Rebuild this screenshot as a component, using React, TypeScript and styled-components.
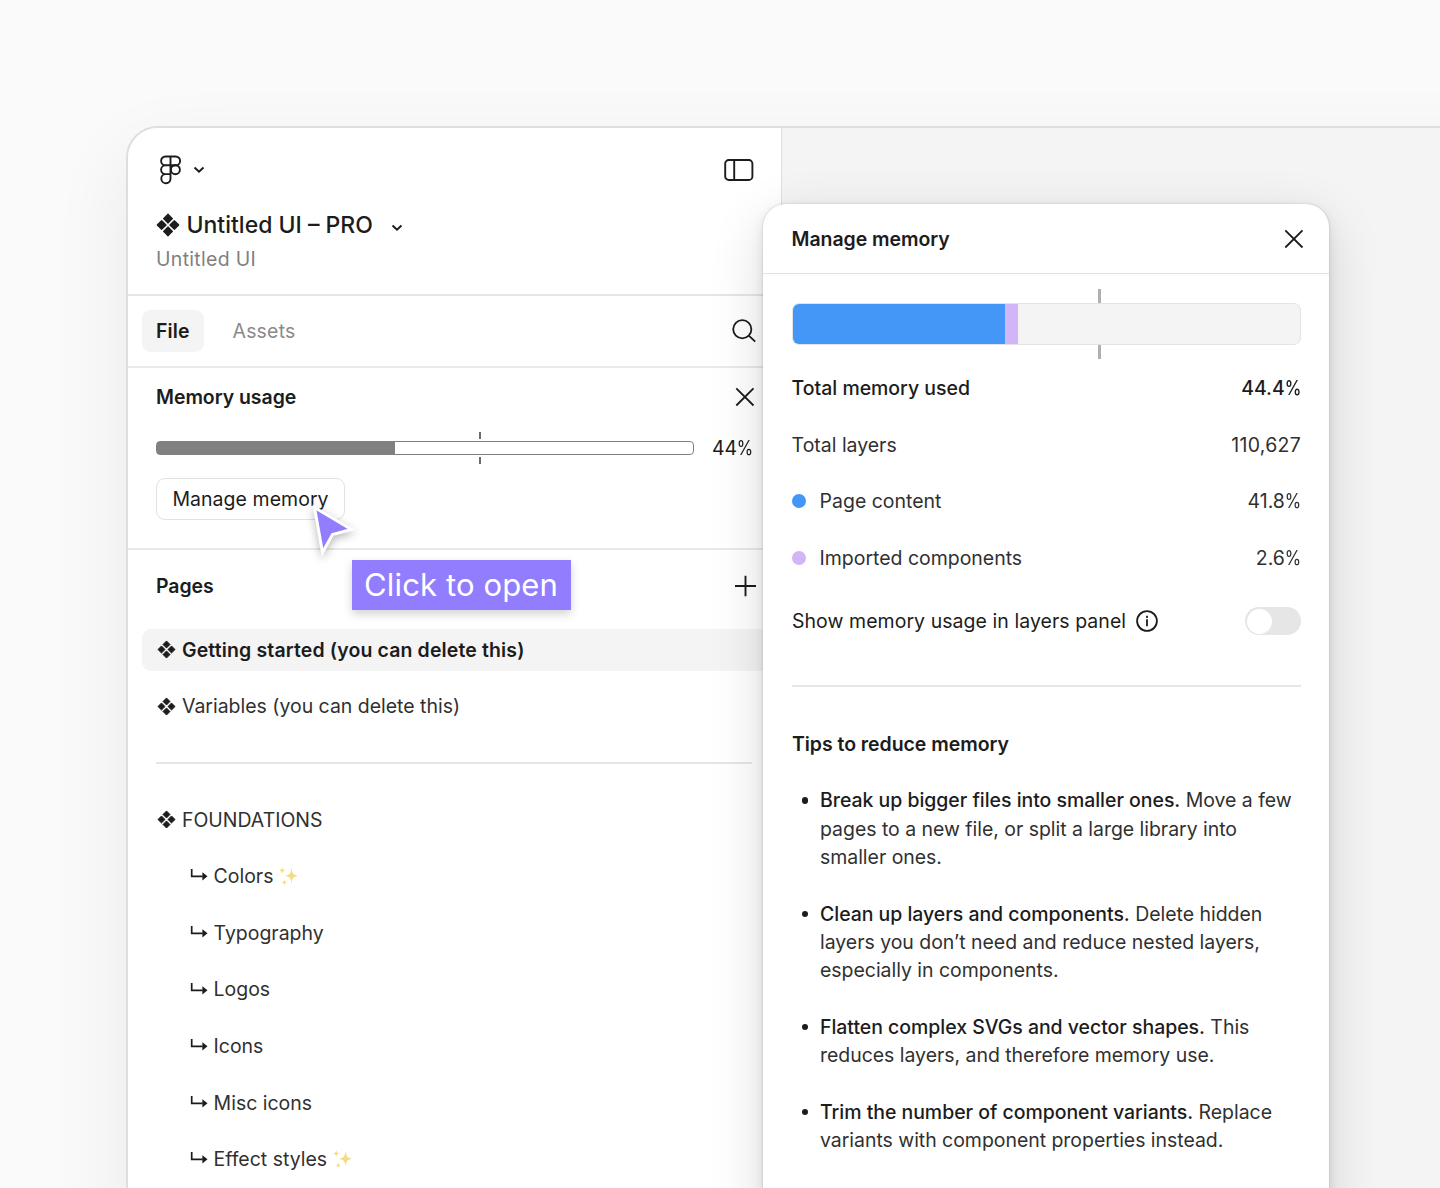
import React from "react";
import styled, { createGlobalStyle } from "styled-components";

const Global = createGlobalStyle`
  * { box-sizing: border-box; }
  body { margin: 0; background: #fafafa; }
  button { font: inherit; letter-spacing: inherit; color: inherit; background: none; border: 0; padding: 0; }
  svg { display: block; flex: none; }
`;

const Stage = styled.main`
  position: relative;
  height: 1188px;
  padding: 126px 0 0 126px;
  overflow: hidden;
  background: #fafafa;
  font-family: Inter, "Liberation Sans", sans-serif;
  font-size: 19.47px;
  line-height: 28.32px;
  letter-spacing: 0;
  color: #1c1c1c;
`;

const Window = styled.div`
  display: flex;
  width: 1500px;
  height: 1300px;
  border: 2px solid #dedede;
  border-radius: 32px;
  background: #f4f4f4;
  overflow: hidden;
  box-shadow: 0 28px 80px rgba(0, 0, 0, 0.07);
`;

const Sidebar = styled.aside`
  width: 654px;
  flex: none;
  background: #fff;
  border-right: 1px solid #dedede;
`;

const SidebarHeader = styled.header`
  height: 168px;
  padding: 27px 27px 0 28px;
  border-bottom: 2px solid #e6e6e6;
`;

const Bar = styled.div`
  display: flex;
  align-items: center;
  justify-content: space-between;
`;

const Cluster = styled.div<{ $gap: number; $indent?: number }>`
  display: flex;
  align-items: center;
  gap: ${(p) => p.$gap}px;
  padding-left: ${(p) => p.$indent ?? 0}px;
`;

const FileName = styled.h1`
  display: flex;
  align-items: center;
  margin: 23px 0 0;
  height: 34px;
  font-size: 23px;
  font-weight: 500;
  letter-spacing: 0;
  > svg:last-child { margin-top: 5px; }
`;

const FileTitle = styled.span`
  margin: 0 18px 0 6.5px;
`;

const Project = styled.div`
  margin-top: 3px;
  color: #808080;
  letter-spacing: 0.33px;
`;

const Tabs = styled.nav`
  display: flex;
  align-items: center;
  height: 72px;
  padding: 0 25px 0 14px;
  border-bottom: 2px solid #e9e9e9;
`;

const Tab = styled.button<{ $active?: boolean }>`
  height: 42px;
  padding: 0 14px;
  border-radius: 9px;
  background: ${(p) => (p.$active ? "#f4f4f4" : "transparent")};
  color: ${(p) => (p.$active ? "#1c1c1c" : "#8a8a8a")};
  font-weight: ${(p) => (p.$active ? 600 : 400)};
  letter-spacing: ${(p) => (p.$active ? 0.1 : 0.2)}px;
  margin-right: 15px;
`;

const SearchSlot = styled.span`
  margin-left: auto;
`;

const Memory = styled.section`
  height: 182px;
  padding: 15px 26px 0 28px;
  border-bottom: 2px solid #e9e9e9;
`;

const Heading = styled.h2`
  margin: 0;
  font-size: inherit;
  font-weight: 600;
  letter-spacing: -0.03px;
`;

const Meter = styled.div`
  display: flex;
  align-items: center;
  height: 34px;
  margin-top: 20px;
`;

const MeterTrack = styled.div`
  position: relative;
  width: 538px;
  height: 14px;
  margin-right: 18px;
  border: 1.5px solid #808080;
  border-radius: 4px;
  flex: none;
`;

const MeterFill = styled.div`
  width: 238px;
  height: 100%;
  background: #808080;
`;

const Tick = styled.i<{ $x: number; $y: number; $w: number; $h: number; $color: string }>`
  position: absolute;
  left: ${(p) => p.$x}px;
  top: ${(p) => p.$y}px;
  width: ${(p) => p.$w}px;
  height: ${(p) => p.$h}px;
  background: ${(p) => p.$color};
`;

const Percent = styled.span`
  display: inline-block;
  margin-left: -3px;
  transform: scaleX(0.86);
  transform-origin: right;
`;

const ManageButton = styled.button`
  display: block;
  height: 42px;
  width: 189px;
  margin-top: 13px;
  border: 1.5px solid #e2e2e2;
  border-radius: 9px;
  letter-spacing: 0.07px;
  white-space: nowrap;
`;

const Pages = styled.section`
  padding: 22px 0 0 14px;
`;

const PagesHead = styled(Bar)`
  padding: 0 25px 0 14px;
`;

const PageList = styled.ul`
  list-style: none;
  margin: 28.5px 0 0;
  padding: 0;
`;

const PageItem = styled.li<{ $active?: boolean; $nested?: boolean }>`
  display: flex;
  align-items: center;
  gap: 6px;
  height: 42px;
  margin-bottom: 14.64px;
  padding-left: ${(p) => (p.$nested ? 47.6 : 15)}px;
  border-radius: 9px 0 0 9px;
  background: ${(p) => (p.$active ? "#f4f4f4" : "transparent")};
  font-weight: ${(p) => (p.$active ? 600 : 400)};
  letter-spacing: ${(p) => (p.$active ? 0.15 : 0)}px;
  color: ${(p) => (p.$active ? "#1c1c1c" : "#303030")};
`;

const PageRule = styled.li`
  height: 56.64px;
  padding: 20px 29px 0 14px;
  &::after { content: ""; display: block; height: 2px; background: #e6e6e6; }
`;

const Dialog = styled.section`
  position: absolute;
  left: 763px;
  top: 204px;
  width: 566px;
  height: 1060px;
  border-radius: 23px;
  background: #fff;
  box-shadow: 0 0 2px rgba(0, 0, 0, 0.2), 0 4px 12px rgba(0, 0, 0, 0.1), 0 16px 54px rgba(0, 0, 0, 0.14);
`;

const DialogHeader = styled(Bar)`
  height: 70px;
  padding: 0.5px 25px 0 28.5px;
  border-bottom: 1.5px solid #e2e2e2;
`;

const DialogBody = styled.div`
  padding: 29px 28px 0 29px;
`;

const Usage = styled.div`
  position: relative;
  display: flex;
  height: 42px;
  margin-bottom: 29px;
  border: 1.5px solid #e4e4e4;
  border-radius: 7px;
  background: #f4f4f4;
`;

const Segment = styled.div<{ $color: string; $first?: boolean }>`
  height: 100%;
  background: ${(p) => p.$color};
  border-radius: ${(p) => (p.$first ? "6px 0 0 6px" : "0")};
`;

const Stat = styled.div<{ $bold?: boolean }>`
  display: flex;
  align-items: center;
  height: 28.32px;
  margin-bottom: 28.32px;
  margin-left: -0.4px;
  font-weight: ${(p) => (p.$bold ? 500 : 400)};
  color: ${(p) => (p.$bold ? "#1c1c1c" : "#303030")};
`;

const StatValue = styled.span<{ $wide?: boolean }>`
  margin-left: auto;
  letter-spacing: ${(p) => (p.$wide ? 0.3 : 0)}px;
`;

const Dot = styled.i<{ $color: string }>`
  width: 14px;
  height: 14px;
  margin-right: 14px;
  border-radius: 50%;
  background: ${(p) => p.$color};
`;

const Option = styled(Bar)`
  height: 28px;
  margin-top: 35px;
  margin-bottom: 49.5px;
  letter-spacing: 0.07px;
`;

const Toggle = styled.button`
  width: 56px;
  height: 28px;
  padding: 1.5px;
  border-radius: 14px;
  background: #e6e6e6;
  &::before { content: ""; display: block; width: 25px; height: 25px; border-radius: 50%; background: #fff; }
`;

const Rule = styled.hr`
  height: 2px;
  margin: 0 0 43px;
  border: 0;
  background: #e6e6e6;
`;

const Tips = styled.ul`
  list-style: none;
  margin: 28.3px 0 0;
  padding: 0 0 0 28px;
`;

const Tip = styled.li`
  position: relative;
  margin-bottom: 28.32px;
  color: #303030;
  letter-spacing: -0.02px;
  white-space: nowrap;
  &::before {
    content: "";
    position: absolute;
    left: -18.5px;
    top: 11px;
    width: 6.5px;
    height: 6.5px;
    border-radius: 50%;
    background: #1c1c1c;
  }
  b { font-weight: 500; color: #1c1c1c; }
`;

const Pointer = styled.svg`
  position: absolute;
  left: 304px;
  top: 498px;
  filter: drop-shadow(0 3px 4px rgba(0, 0, 0, 0.28));
`;

const Callout = styled.div`
  position: absolute;
  left: 352px;
  top: 560px;
  width: 219px;
  height: 50px;
  padding-right: 1px;
  background: #917dfd;
  color: #fff;
  font-size: 31px;
  line-height: 50px;
  letter-spacing: 0.12px;
  text-align: center;
  white-space: nowrap;
  box-shadow: 0 4px 9px rgba(0, 0, 0, 0.18);
`;

const INK = "#1c1c1c";

const FigmaMark = () => (
  <svg width="22" height="30" viewBox="0 0 22 30" fill="none" stroke={INK} strokeWidth="1.9">
    <path d="M10.500 1.500H5.500a4.400 4.400 0 0 0 0 8.800H10.500zM10.500 1.500h5.200a4.400 4.400 0 0 1 0 8.800H10.500zM10.500 10.300H5.500a4.400 4.400 0 0 0 0 8.800H10.500zM10.500 19.100H5.500a4.600 4.600 0 1 0 5 4.500z" />
    <circle cx="15.4" cy="14.700" r="4.5" />
  </svg>
);

const Chevron = () => (
  <svg width="12" height="8" viewBox="0 0 12 8" fill="none" stroke={INK} strokeWidth="1.9">
    <path d="M1.500 1.500 6 5.800l4.500-4.300" />
  </svg>
);

const PanelIcon = () => (
  <svg width="30" height="22" viewBox="0 0 30 22" fill="none" stroke={INK} strokeWidth="1.9">
    <rect x="1.2" y="1" width="27.2" height="20" rx="3.6" />
    <path d="M10.200 1v20" />
  </svg>
);

const SearchIcon = () => (
  <svg width="24" height="24" viewBox="0 0 24 24" fill="none" stroke={INK} strokeWidth="1.8">
    <circle cx="10.3" cy="10.2" r="9.1" />
    <path d="m16.800 16.700 6.400 6" />
  </svg>
);

const CloseIcon = () => (
  <svg width="21" height="20" viewBox="0 0 21 20" fill="none" stroke={INK} strokeWidth="1.8">
    <path d="m2.300 1.300 17.200 17.200M19.500 1.300 2.300 18.500" />
  </svg>
);

const PlusIcon = () => (
  <svg width="21" height="22" viewBox="0 0 21 22" fill="none" stroke={INK} strokeWidth="1.9">
    <path d="M10.500.8v20.400M0 11h21" />
  </svg>
);

const InfoIcon = () => (
  <svg width="22" height="22" viewBox="0 0 22 22" fill="none" stroke={INK} strokeWidth="1.8">
    <circle cx="11" cy="11" r="9.9" />
    <path d="M11 9.300v6.900M11 5.800v2.100" />
  </svg>
);

const Diamonds = ({ size }: { size: number }) => (
  <svg width={size} height={size} viewBox="0 0 22 22" fill={INK} stroke={INK} strokeWidth="1" strokeLinejoin="round">
    <path d="m11 1.100 4.100 4.100L11 9.300 6.900 5.200zM11 12.700l4.100 4.100-4.100 4.100-4.100-4.100zM5.200 6.900 9.300 11l-4.100 4.100L1.100 11zM16.800 6.900l4.100 4.100-4.100 4.100-4.100-4.100z" />
  </svg>
);

const Branch = () => (
  <svg width="18" height="14" viewBox="0 0 18 14" fill="none">
    <path d="M1.700 0v7.300h11" stroke={INK} strokeWidth="1.7" />
    <path d="M12.400 3.200 17.500 7.300 12.400 11.400z" fill={INK} />
  </svg>
);

const Sparkles = () => (
  <svg width="20" height="20" viewBox="0 0 18 18" fill="#f3dc86">
    <path d="M11.300 1.700c.7 4.800 1.400 6 5.700 7-4.300 1-5 2.200-5.700 7-.7-4.800-1.400-6-5.700-7 4.300-1 5-2.200 5.700-7z" />
    <path d="M2.900 1c.4 2 .8 2.500 2.600 3-1.800.5-2.200 1-2.600 3C2.500 5 2.100 4.500.3 4c1.800-.5 2.200-1 2.600-3zM4.800 12.200c.4 1.800.7 2.200 2.300 2.600-1.600.4-1.900.8-2.300 2.600-.4-1.800-.7-2.200-2.300-2.600 1.600-.4 1.900-.8 2.300-2.600z" />
  </svg>
);

const nestedPages = [
  { name: "Colors", isNew: true },
  { name: "Typography" },
  { name: "Logos" },
  { name: "Icons" },
  { name: "Misc icons" },
  { name: "Effect styles", isNew: true },
];

const usage = [
  { label: "Page content", value: 41.8, color: "#4597f7" },
  { label: "Imported components", value: 2.6, color: "#d1b5f8" },
];

export default function App() {
  return (
    <Stage>
      <Global />
      <Window>
        <Sidebar>
          <SidebarHeader>
            <Bar>
              <Cluster $gap={11} $indent={4}>
                <FigmaMark />
                <Chevron />
              </Cluster>
              <PanelIcon />
            </Bar>
            <FileName>
              <Diamonds size={24} />
              <FileTitle>Untitled UI – PRO</FileTitle>
              <Chevron />
            </FileName>
            <Project>Untitled UI</Project>
          </SidebarHeader>

          <Tabs>
            <Tab $active>File</Tab>
            <Tab>Assets</Tab>
            <SearchSlot><SearchIcon /></SearchSlot>
          </Tabs>

          <Memory>
            <Bar>
              <Heading>Memory usage</Heading>
              <CloseIcon />
            </Bar>
            <Meter>
              <MeterTrack>
                <MeterFill />
                <Tick $x={322} $y={-10} $w={2} $h={7} $color="#6c6c6c" />
                <Tick $x={322} $y={15} $w={2} $h={7} $color="#6c6c6c" />
              </MeterTrack>
              <span>44<Percent>%</Percent></span>
            </Meter>
            <ManageButton>Manage memory</ManageButton>
          </Memory>

          <Pages>
            <PagesHead>
              <Heading>Pages</Heading>
              <PlusIcon />
            </PagesHead>
            <PageList>
              <PageItem $active><Diamonds size={19} />Getting started (you can delete this)</PageItem>
              <PageItem><Diamonds size={19} />Variables (you can delete this)</PageItem>
              <PageRule />
              <PageItem><Diamonds size={19} />FOUNDATIONS</PageItem>
              {nestedPages.map((page) => (
                <PageItem key={page.name} $nested>
                  <Branch />
                  {page.name}
                  {page.isNew && <Sparkles />}
                </PageItem>
              ))}
            </PageList>
          </Pages>
        </Sidebar>
      </Window>

      <Dialog>
        <DialogHeader>
          <Heading>Manage memory</Heading>
          <CloseIcon />
        </DialogHeader>
        <DialogBody>
          <Usage>
            {usage.map((part, i) => (
              <Segment key={part.label} $color={part.color} $first={i === 0} style={{ width: `${part.value}%` }} />
            ))}
            <Tick $x={304.5} $y={-15} $w={3} $h={14} $color="#b0b0b0" />
            <Tick $x={304.5} $y={41} $w={3} $h={14} $color="#b0b0b0" />
          </Usage>
          <Stat $bold>Total memory used<StatValue>44.4<Percent>%</Percent></StatValue></Stat>
          <Stat>Total layers<StatValue $wide>110,627</StatValue></Stat>
          {usage.map((part) => (
            <Stat key={part.label}>
              <Dot $color={part.color} />
              {part.label}
              <StatValue>{part.value}<Percent>%</Percent></StatValue>
            </Stat>
          ))}
          <Option>
            <Cluster $gap={9.5}>
              <span>Show memory usage in layers panel</span>
              <InfoIcon />
            </Cluster>
            <Toggle aria-label="Show memory usage in layers panel" />
          </Option>
          <Rule />
          <Heading>Tips to reduce memory</Heading>
          <Tips>
            <Tip>
              <b>Break up bigger files into smaller ones.</b> Move a few<br />
              pages to a new file, or split a large library into<br />
              smaller ones.
            </Tip>
            <Tip>
              <b>Clean up layers and components.</b> Delete hidden<br />
              layers you don’t need and reduce nested layers,<br />
              especially in components.
            </Tip>
            <Tip>
              <b>Flatten complex SVGs and vector shapes.</b> This<br />
              reduces layers, and therefore memory use.
            </Tip>
            <Tip>
              <b>Trim the number of component variants.</b> Replace<br />
              variants with component properties instead.
            </Tip>
          </Tips>
        </DialogBody>
      </Dialog>

      <Pointer width="54" height="62" viewBox="0 0 54 62">
        <path d="M10.500 9.500 47.500 31.500 28.500 36.500 18.500 54.500z" fill="#917dfd" stroke="#fff" strokeWidth="3" />
      </Pointer>
      <Callout>Click to open</Callout>
    </Stage>
  );
}
